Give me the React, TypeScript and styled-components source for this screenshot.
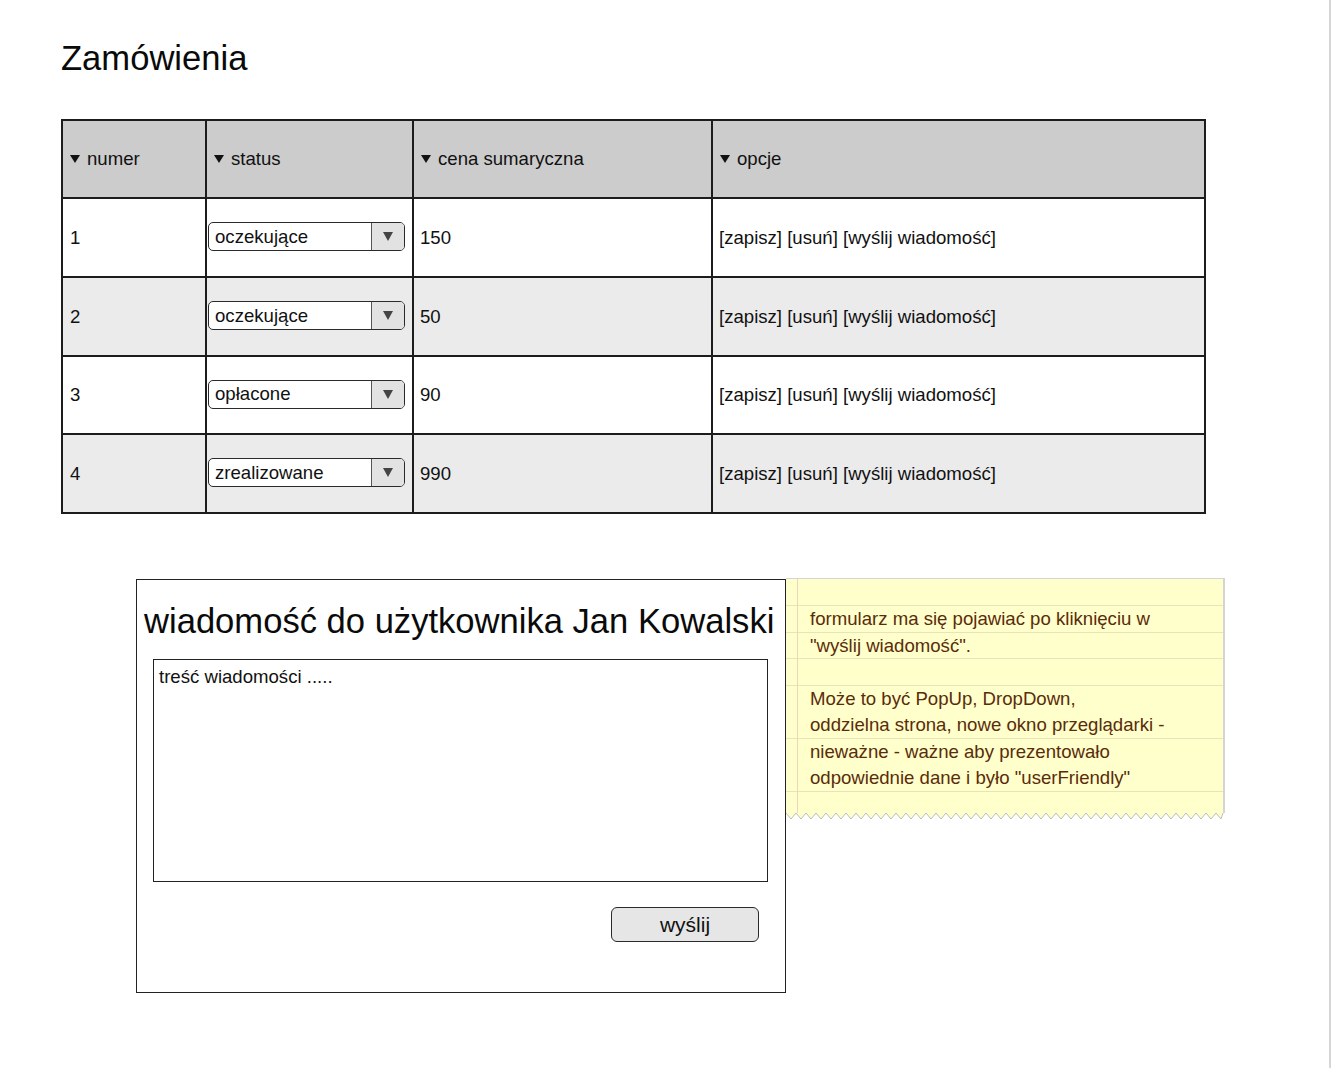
import React from "react";
import styled, { createGlobalStyle } from "styled-components";

const Global = createGlobalStyle`
  html, body { margin: 0; padding: 0; background: #ffffff; }
  body { font-family: "Liberation Sans", Arial, Helvetica, sans-serif; color: #111; }
`;

const Page = styled.div`
  box-sizing: border-box;
  width: 1331px;
  min-height: 1068px;
  border-right: 2px solid #d6d6d6;
  padding: 38px 0 0 61px;
`;

const Title = styled.h1`
  margin: 0;
  font-size: 34.6px;
  line-height: 40px;
  font-weight: 400;
  color: #0a0a0a;
`;

const Table = styled.div`
  margin-top: 41px;
  display: grid;
  grid-template-columns: 142px 205px 297px 491px;
  grid-template-rows: 76px 77px 77px 76px 77px;
  gap: 2px;
  padding: 2px;
  background: #1c1c1c;
  width: fit-content;
`;

const HeadCell = styled.div`
  background: #cccccc;
  display: flex;
  align-items: center;
  padding-left: 7px;
  font-size: 18.6px;
`;

const HeadArrow = styled.span`
  display: inline-block;
  width: 0;
  height: 0;
  border-left: 5px solid transparent;
  border-right: 5px solid transparent;
  border-top: 8px solid #111;
  margin-right: 7px;
`;

const Cell = styled.div<{ $alt?: boolean; $pad?: number }>`
  background: ${(p) => (p.$alt ? "#ebebeb" : "#ffffff")};
  display: flex;
  align-items: center;
  padding-left: ${(p) => (p.$pad ?? 6)}px;
  font-size: 18.6px;
  white-space: nowrap;
`;

const Select = styled.div`
  box-sizing: border-box;
  width: 197px;
  height: 29px;
  border: 1.5px solid #2a2a2a;
  border-radius: 5px;
  display: flex;
  overflow: hidden;
  background: #fff;
  margin-top: -2px;
`;

const SelectValue = styled.div`
  flex: 1;
  display: flex;
  align-items: center;
  padding-left: 6px;
  font-size: 18.6px;
`;

const SelectButton = styled.div`
  width: 32px;
  border-left: 1px solid #555;
  background: #e2e2e2;
  display: flex;
  align-items: center;
  justify-content: center;
`;

const SelectArrow = styled.span`
  width: 0;
  height: 0;
  border-left: 5.5px solid transparent;
  border-right: 5.5px solid transparent;
  border-top: 9px solid #444;
`;

const Bottom = styled.div`
  margin-top: 65px;
  margin-left: 75px;
  display: flex;
  align-items: flex-start;
`;

const Form = styled.div`
  box-sizing: border-box;
  width: 650px;
  height: 414px;
  border: 1.5px solid #222;
  padding: 21px 0 0 7px;
  display: flex;
  flex-direction: column;
`;

const FormTitle = styled.h2`
  margin: 0;
  font-size: 34.6px;
  line-height: 40px;
  font-weight: 400;
  white-space: nowrap;
  color: #0a0a0a;
`;

const TextArea = styled.div`
  box-sizing: border-box;
  margin: 18px 0 0 9px;
  width: 615px;
  height: 223px;
  border: 1.5px solid #222;
  padding: 6px 5px;
  font-size: 18.6px;
  line-height: 22px;
`;

const ButtonRow = styled.div`
  display: flex;
  justify-content: flex-end;
  padding-right: 26px;
  margin-top: 25px;
`;

const SendButton = styled.div`
  box-sizing: border-box;
  width: 148px;
  height: 35px;
  border: 1.5px solid #2a2a2a;
  border-radius: 6px;
  background: #e6e6e6;
  display: flex;
  align-items: center;
  justify-content: center;
  font-size: 21px;
`;

const Note = styled.div`
  width: 439px;
  margin-top: -1px;
  display: flex;
  flex-direction: column;
`;

const NoteBody = styled.div`
  box-sizing: border-box;
  height: 233px;
  border-top: 1px solid #d4d4d4;
  border-right: 2px solid #d4d4d4;
  background-color: #ffffcc;
  background-image: linear-gradient(
      to right,
      transparent 11px,
      #f3d2bd 11px,
      #f3d2bd 12px,
      transparent 12px
    ),
    repeating-linear-gradient(
      to bottom,
      transparent 0,
      transparent 25.5px,
      #e8e3b8 25.5px,
      #e8e3b8 26.5px
    );
  background-position: 0 0, 0 1px;
  padding: 27px 0 0 24px;
`;

const NoteText = styled.div`
  font-size: 18.6px;
  line-height: 26.5px;
  color: #5a2c0a;
  white-space: nowrap;
`;

const Zigzag = styled.svg`
  display: block;
  margin-top: -1px;
`;

const rows = [
  { n: "1", s: "oczekujące", c: "150" },
  { n: "2", s: "oczekujące", c: "50" },
  { n: "3", s: "opłacone", c: "90" },
  { n: "4", s: "zrealizowane", c: "990" },
];

function zigzagPoints(width: number) {
  const step = 10;
  const pts: string[] = [];
  let x = 0;
  let low = true;
  pts.push(`0 3`);
  while (x < width - 2) {
    x = Math.min(x + step / 2, width - 2);
    pts.push(`${x} ${low ? 9 : 3}`);
    low = !low;
  }
  return pts;
}

export default function App() {
  const headers = ["numer", "status", "cena sumaryczna", "opcje"];
  const pts = zigzagPoints(439);
  const fillPath = `M0 0 L${pts.join(" L")} L437 0 Z`;
  return (
    <>
      <Global />
      <Page>
        <Title>Zamówienia</Title>
        <Table>
          {headers.map((h) => (
            <HeadCell key={h}>
              <HeadArrow />
              {h}
            </HeadCell>
          ))}
          {rows.map((r, i) => {
            const alt = i % 2 === 1;
            return (
              <React.Fragment key={r.n}>
                <Cell $alt={alt} $pad={7}>{r.n}</Cell>
                <Cell $alt={alt} $pad={1}>
                  <Select>
                    <SelectValue>{r.s}</SelectValue>
                    <SelectButton>
                      <SelectArrow />
                    </SelectButton>
                  </Select>
                </Cell>
                <Cell $alt={alt}>{r.c}</Cell>
                <Cell $alt={alt}>[zapisz] [usuń] [wyślij wiadomość]</Cell>
              </React.Fragment>
            );
          })}
        </Table>
        <Bottom>
          <Form>
            <FormTitle>wiadomość do użytkownika Jan Kowalski</FormTitle>
            <TextArea>treść wiadomości .....</TextArea>
            <ButtonRow>
              <SendButton>wyślij</SendButton>
            </ButtonRow>
          </Form>
          <Note>
            <NoteBody>
              <NoteText>
                formularz ma się pojawiać po kliknięciu w
                <br />
                "wyślij wiadomość".
                <br />
                <br />
                Może to być PopUp, DropDown,
                <br />
                oddzielna strona, nowe okno przeglądarki -
                <br />
                nieważne - ważne aby prezentowało
                <br />
                odpowiednie dane i było "userFriendly"
              </NoteText>
            </NoteBody>
            <Zigzag width="439" height="10" viewBox="0 0 439 10">
              <path d={fillPath} fill="#ffffcc" stroke="none" />
              <polyline
                points={pts.join(" ")}
                fill="none"
                stroke="#bdbdbd"
                strokeWidth="1"
              />
              <rect x="11" y="0" width="1" height="3" fill="#f3d2bd" />
              <rect x="437" y="0" width="2" height="3" fill="#d4d4d4" />
            </Zigzag>
          </Note>
        </Bottom>
      </Page>
    </>
  );
}
